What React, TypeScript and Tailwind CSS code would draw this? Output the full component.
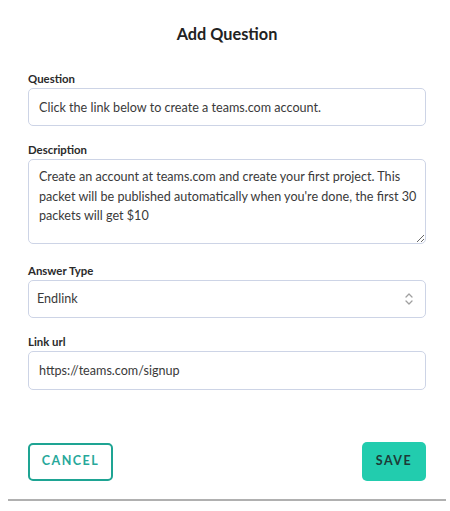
import React, { useState } from 'react';

const Label: React.FC<{ children: React.ReactNode }> = ({ children }) => (
  <label className="block text-[11.4px] leading-[16px] font-bold text-[#2a2a2a] mb-px">{children}</label>
);

const fieldClass =
  'w-full rounded-[5px] border border-[#cdd4e6] bg-white px-[10px] text-[12.6px] text-[#3a3a3a] outline-none';

export default function App() {
  const [question, setQuestion] = useState('Click the link below to create a teams.com account.');
  const [description, setDescription] = useState(
    "Create an account at teams.com and create your first project. This packet will be published automatically when you're done, the first 30 packets will get $10"
  );
  const [answerType, setAnswerType] = useState('Endlink');
  const [url, setUrl] = useState('https://teams.com/signup');

  return (
    <div className="w-[450px] h-[511px] bg-white" style={{ fontFamily: 'Lato, "Open Sans", sans-serif' }}>
      <div className="ml-[8px] w-[438px] h-[501px] bg-white px-[20px] pt-[22px] flex flex-col border-b-2 border-[#b0b0b0]">
        <h2 className="text-center text-[16.3px] leading-[24px] font-bold text-[#222] mb-[25px]">Add Question</h2>

        <div className="mb-[16px]">
          <Label>Question</Label>
          <input
            className={`${fieldClass} h-[38px]`}
            value={question}
            onChange={(e) => setQuestion(e.target.value)}
          />
        </div>

        <div className="mb-[16px]">
          <Label>Description</Label>
          <textarea
            className={`${fieldClass} block h-[85px] pt-[7px] pr-[3px] leading-[19.5px] resize-y overflow-hidden`}
            value={description}
            onChange={(e) => setDescription(e.target.value)}
          />
        </div>

        <div className="mb-[16px] mt-[3px]">
          <Label>Answer Type</Label>
          <div className="relative">
            <select
              className={`${fieldClass} h-[38px] appearance-none pl-[8px]`}
              value={answerType}
              onChange={(e) => setAnswerType(e.target.value)}
            >
              <option>Endlink</option>
              <option>Text</option>
              <option>Multiple choice</option>
            </select>
            <svg
              className="pointer-events-none absolute right-[12px] top-[11px]"
              width="10"
              height="16"
              viewBox="0 0 10 16"
              fill="none"
              stroke="#a0a0a0"
              strokeWidth="1.3"
              strokeLinecap="round"
              strokeLinejoin="round"
            >
              <path d="M2 6 L5 3 L8 6" />
              <path d="M2 10 L5 13 L8 10" />
            </svg>
          </div>
        </div>

        <div>
          <Label>Link url</Label>
          <input
            className={`${fieldClass} h-[39px]`}
            value={url}
            onChange={(e) => setUrl(e.target.value)}
          />
        </div>

        <div className="mt-[52px] flex items-center justify-between">
          <button className="h-[38px] w-[85px] rounded-[5px] border-2 border-[#1ea493] bg-white text-[12.5px] font-bold tracking-[1.5px] text-[#27a89a]">
            CANCEL
          </button>
          <button className="h-[39px] w-[64px] rounded-[5px] bg-[#22ccae] text-[12.5px] font-bold tracking-[1.5px] text-[#1d3a37]">
            SAVE
          </button>
        </div>
      </div>
    </div>
  );
}
